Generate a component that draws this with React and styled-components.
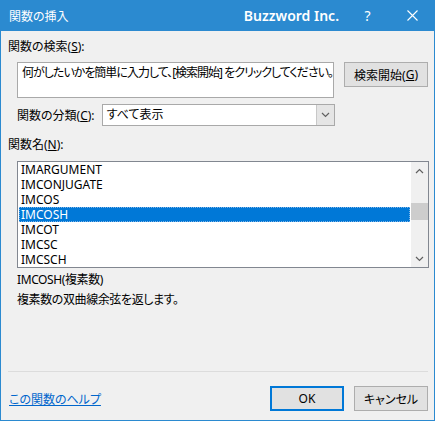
import styled, { createGlobalStyle } from "styled-components";

const GlobalStyle = createGlobalStyle`
    html, body {
        margin: 0;
        padding: 0;
        background: #f0f0f0;
    }
    body {
        font-family: "Noto Sans", "Noto Sans CJK JP", sans-serif;
        font-size: 12px;
        color: #000;
        font-feature-settings: "palt";
    }
`;

const Window = styled.div`
    width: 435px;
    height: 421px;
    box-sizing: border-box;
    border: 1px solid #2b8ad0;
    border-top: none;
    background: #f0f0f0;
    display: flex;
    flex-direction: column;
`;

const TitleBar = styled.div`
    height: 31px;
    margin: 0 -1px;
    background: #2b8ad0;
    color: #fff;
    display: flex;
    align-items: center;
    padding-left: 9px;

    span.title {
        flex: 1;
        font-size: 12px;
    }
    span.brand {
        font-size: 14px;
        font-weight: 600;
        margin-right: 6px;
    }
`;

const CaptionButton = styled.div`
    width: 45px;
    height: 31px;
    display: flex;
    align-items: center;
    justify-content: center;
    font-size: 14px;
`;

const Body = styled.div`
    flex: 1;
    display: flex;
    flex-direction: column;
    padding: 0 6px 9px 7px;
`;

const Label = styled.div`
    line-height: 16px;
    margin-top: ${(p) => p.$top || 0}px;
    padding-left: ${(p) => p.$indent || 0}px;
    white-space: nowrap;
`;

const Row = styled.div`
    display: flex;
    align-items: ${(p) => p.$align || "center"};
    margin-top: ${(p) => p.$top || 0}px;
    padding-left: ${(p) => p.$indent || 0}px;
    gap: ${(p) => p.$gap || 0}px;
`;

const TextBox = styled.div`
    width: 317px;
    height: 36px;
    box-sizing: border-box;
    border: 1px solid #a9a9a9;
    background: #fff;
    padding: 2px 4px;
    line-height: 16px;
    letter-spacing: -1px;
    white-space: nowrap;
`;

const Button = styled.div`
    width: ${(p) => p.$w || 74}px;
    height: 25px;
    box-sizing: border-box;
    border: ${(p) => (p.$default ? "2px solid #0078d7" : "1px solid #adadad")};
    background: #e1e1e1;
    display: flex;
    align-items: center;
    justify-content: center;
    white-space: nowrap;
`;

const Select = styled.div`
    width: 233px;
    height: 22px;
    box-sizing: border-box;
    border: 1px solid #a9a9a9;
    background: #fff;
    display: flex;
    margin-left: 7px;

    span.value {
        flex: 1;
        padding-left: 4px;
        line-height: 20px;
    }
    span.arrow {
        width: 17px;
        background: #e5e5e5;
        border-left: 1px solid #c8c8c8;
        display: flex;
        align-items: center;
        justify-content: center;
    }
`;

const ListBox = styled.div`
    margin: 8px 0 0 9px;
    width: 412px;
    height: 107px;
    box-sizing: border-box;
    border: 1px solid #828790;
    background: #fff;
    display: flex;
`;

const Items = styled.ul`
    flex: 1;
    margin: 0;
    padding: 0 1px;
    list-style: none;
`;

const Item = styled.li`
    height: 15px;
    line-height: 15px;
    padding-left: 2px;
    background: ${(p) => (p.$selected ? "#0078d7" : "transparent")};
    color: ${(p) => (p.$selected ? "#fff" : "#000")};
    outline: ${(p) => (p.$selected ? "1px dotted #7fb4e6" : "none")};
    outline-offset: -1px;
`;

const ScrollBar = styled.div`
    width: 17px;
    background: #f0f0f0;
    display: flex;
    flex-direction: column;
    align-items: center;

    .btn {
        height: 17px;
        width: 17px;
        display: flex;
        align-items: center;
        justify-content: center;
    }
    .track {
        flex: 1;
        width: 17px;
        display: flex;
        flex-direction: column;
    }
    .thumb {
        margin-top: 24px;
        height: 17px;
        background: #cdcdcd;
    }
`;

const Description = styled.div`
    margin-top: 2px;
    padding-left: 9px;
    line-height: 20px;
    letter-spacing: -0.4px;
`;

const Footer = styled.div`
    margin-top: auto;
    border-top: 1px solid #dcdcdc;
    padding-top: 14px;
    display: flex;
    align-items: center;
    gap: 10px;

    a {
        flex: 1;
        color: #0066cc;
        text-decoration: underline;
        margin-left: 1px;
    }
`;

const Chevron = ({ up }) => (
    <svg width="9" height="6" viewBox="0 0 9 6">
        <path
            d={up ? "M1 5 L4.5 1.5 L8 5" : "M1 1 L4.5 4.5 L8 1"}
            fill="none"
            stroke="#606060"
            strokeWidth="1.2"
        />
    </svg>
);

const items = ["IMARGUMENT", "IMCONJUGATE", "IMCOS", "IMCOSH", "IMCOT", "IMCSC", "IMCSCH"];

const App = () => {
    return (
        <>
            <GlobalStyle />
            <Window>
                <TitleBar>
                    <span className="title">関数の挿入</span>
                    <span className="brand">Buzzword Inc.</span>
                    <CaptionButton>?</CaptionButton>
                    <CaptionButton>
                        <svg width="11" height="11" viewBox="0 0 11 11">
                            <path d="M0.5 0.5 L10.5 10.5 M10.5 0.5 L0.5 10.5" stroke="#fff" strokeWidth="1.1" />
                        </svg>
                    </CaptionButton>
                </TitleBar>
                <Body>
                    <Label $top={8}>関数の検索(<u>S</u>):</Label>
                    <Row $top={7} $indent={9} $gap={10} $align="flex-start">
                        <TextBox>何がしたいかを簡単に入力して、[検索開始] をクリックしてください。</TextBox>
                        <Button $w={84}>検索開始(<u>G</u>)</Button>
                    </Row>
                    <Row $top={6} $indent={9}>
                        <span>関数の分類(<u>C</u>):</span>
                        <Select>
                            <span className="value">すべて表示</span>
                            <span className="arrow"><Chevron /></span>
                        </Select>
                    </Row>
                    <Label $top={11}>関数名(<u>N</u>):</Label>
                    <ListBox>
                        <Items>
                            {items.map((it) => (
                                <Item key={it} $selected={it === "IMCOSH"}>{it}</Item>
                            ))}
                        </Items>
                        <ScrollBar>
                            <div className="btn"><Chevron up /></div>
                            <div className="track"><div className="thumb" /></div>
                            <div className="btn"><Chevron /></div>
                        </ScrollBar>
                    </ListBox>
                    <Description>
                        <div>IMCOSH(複素数)</div>
                        <div>複素数の双曲線余弦を返します。</div>
                    </Description>
                    <Footer>
                        <a href="#">この関数のヘルプ</a>
                        <Button $default>OK</Button>
                        <Button>キャンセル</Button>
                    </Footer>
                </Body>
            </Window>
        </>
    );
};

export default App;
